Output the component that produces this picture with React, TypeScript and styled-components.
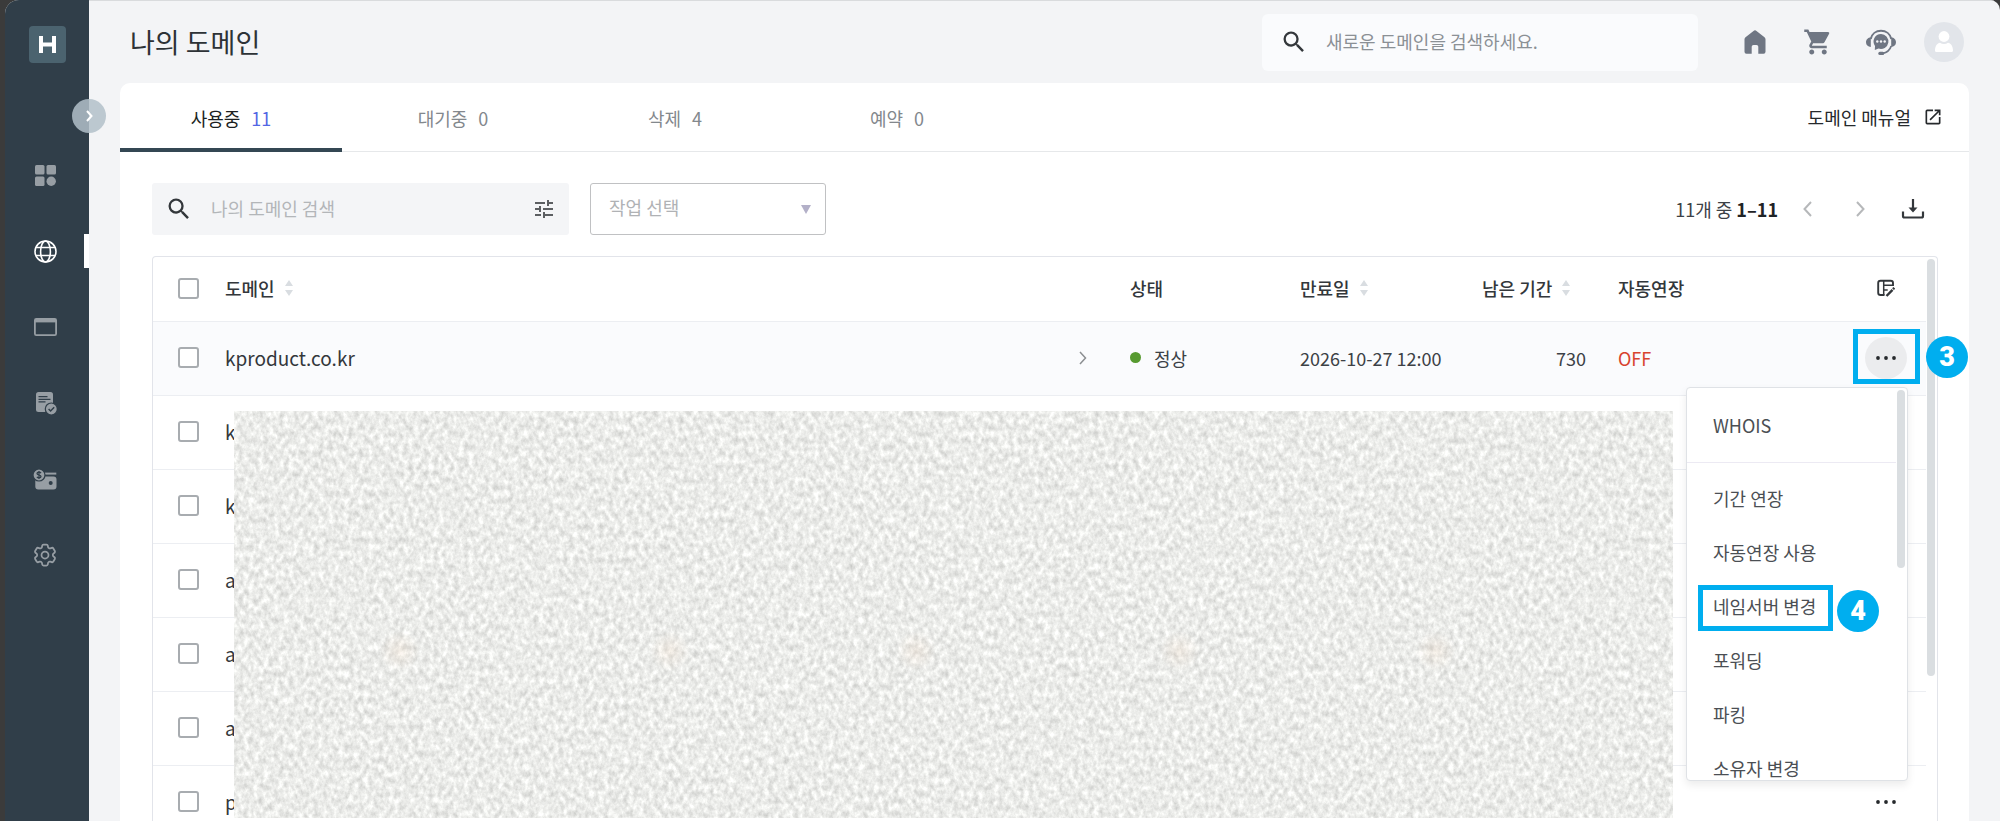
import React from "react";
import styled, { createGlobalStyle, css } from "styled-components";
import { MdOpenInNew, MdSearch, MdShoppingCart, MdTune } from "react-icons/md";
import { HiOutlineCog6Tooth } from "react-icons/hi2";

const GlobalStyle = createGlobalStyle`
  *, *::before, *::after { box-sizing: border-box; }
  body {
    margin: 0;
    background: #3b3b3b;
    color: #3c4146;
    font-family: "Noto Sans CJK KR", "Noto Sans", sans-serif;
    font-size: 18px;
    line-height: 26px;
  }
  button, input, select { font: inherit; color: inherit; }
  button { border: 0; padding: 0; background: none; cursor: pointer; }
  a { color: inherit; text-decoration: none; }
`;

const ACCENT = "#00aeef";
const LINE = "#eceef2";

/* ---------- shell ---------- */

const Shell = styled.div`
  display: flex;
  height: 100vh;
  margin-left: 5px;
  overflow: hidden;
  border-radius: 14px 10px 0 0;
  background: #f3f4f6;
`;

const Sidebar = styled.aside`
  position: relative;
  z-index: 2;
  flex: none;
  width: 84px;
  padding-top: 26px;
  background: #303e49;
`;

const Logo = styled.a`
  display: flex;
  align-items: center;
  justify-content: center;
  width: 37px;
  height: 37px;
  margin: 0 auto 74px;
  border-radius: 4px;
  background: #4b636f;
`;

const ExpandButton = styled.button`
  position: absolute;
  top: 99px;
  right: -17px;
  display: flex;
  align-items: center;
  justify-content: center;
  width: 34px;
  height: 34px;
  border-radius: 50%;
  background: rgba(177, 191, 201, 0.85);
`;

const Nav = styled.nav`
  display: flex;
  flex-direction: column;
`;

const NavItem = styled.a<{ $active?: boolean }>`
  position: relative;
  display: flex;
  align-items: center;
  justify-content: center;
  height: 76px;
  padding-right: 4px;
  color: ${(p) => (p.$active ? "#ffffff" : "#979ea4")};
  ${(p) =>
    p.$active &&
    css`
      &::after {
        content: "";
        position: absolute;
        right: 0;
        width: 5px;
        height: 34px;
        background: #ffffff;
      }
    `}
`;

const Main = styled.main`
  flex: 1;
  min-width: 0;
  display: flex;
  flex-direction: column;
  padding: 0 31px;
  border-top: 1px solid #d9dbdd;
`;

const Header = styled.header`
  display: flex;
  align-items: center;
  height: 82px;
  padding: 0 5px 0 10px;
`;

const Title = styled.h1`
  flex: 1;
  margin: 0;
  color: #2d3236;
  font-size: 27px;
  font-weight: 400;
  line-height: 38px;
`;

const SearchBox = styled.label<{ $large?: boolean }>`
  display: flex;
  align-items: center;
  gap: 18px;
  width: ${(p) => (p.$large ? "436px" : "417px")};
  height: ${(p) => (p.$large ? "57px" : "52px")};
  padding: 0 ${(p) => (p.$large ? "18px" : "13px")};
  border-radius: ${(p) => (p.$large ? "6px" : "3px")};
  background: ${(p) => (p.$large ? "#fafbfd" : "#f4f5f7")};
  color: #33373b;
  svg { flex: none; }
`;

const SearchInput = styled.input<{ $tone: string }>`
  flex: 1;
  min-width: 0;
  padding: 0 0 3px;
  border: 0;
  outline: 0;
  background: none;
  &::placeholder { color: ${(p) => p.$tone}; opacity: 1; }
`;

const HeaderActions = styled.div`
  display: flex;
  gap: 23px;
  margin-left: 37px;
  color: #6f7683;
`;

const RoundButton = styled.button<{ $fill?: string }>`
  display: flex;
  align-items: center;
  justify-content: center;
  width: 40px;
  height: 40px;
  border-radius: 50%;
  background: ${(p) => p.$fill ?? "transparent"};
`;

/* ---------- card ---------- */

const Card = styled.section`
  flex: 1;
  min-height: 0;
  display: flex;
  flex-direction: column;
  border-radius: 10px 10px 0 0;
  background: #ffffff;
`;

const TabBar = styled.div`
  display: flex;
  align-items: stretch;
  height: 69px;
  border-bottom: 1px solid #e6e8ea;
`;

const Tab = styled.button<{ $active?: boolean }>`
  width: 222px;
  margin-bottom: -1px;
  padding-top: 4px;
  border-bottom: 4px solid ${(p) => (p.$active ? "#344753" : "transparent")};
  color: ${(p) => (p.$active ? "#1c1f22" : "#83888d")};
`;

const TabCount = styled.span<{ $active?: boolean }>`
  margin-left: 11px;
  color: ${(p) => (p.$active ? "#5266e4" : "inherit")};
`;

const ManualLink = styled.a`
  display: flex;
  align-items: center;
  gap: 12px;
  margin-left: auto;
  margin-right: 26px;
  color: #26292c;
`;

const Toolbar = styled.div`
  display: flex;
  align-items: center;
  gap: 21px;
  padding: 31px 36px 21px 32px;
`;

const SelectWrap = styled.div`
  position: relative;
  width: 236px;
  svg {
    position: absolute;
    top: 22px;
    right: 15px;
    pointer-events: none;
  }
`;

const Select = styled.select`
  appearance: none;
  display: block;
  width: 100%;
  height: 52px;
  padding: 0 40px 4px 18px;
  border: 1px solid #c0c1c3;
  border-radius: 3px;
  background: #ffffff;
  color: #b0b2b5;
`;

const Pager = styled.div`
  display: flex;
  align-items: center;
  gap: 13px;
  margin-left: auto;
  strong { color: #1f2326; font-weight: 700; }
`;

const PagerText = styled.span`
  margin-right: -4px;
`;

/* ---------- table ---------- */

const Panel = styled.div`
  position: relative;
  flex: 1;
  min-height: 0;
  display: flex;
  margin: 0 31px 0 32px;
  border: 1px solid #e2e4ea;
  border-bottom: 0;
  border-radius: 4px 4px 0 0;
`;

const TableScroll = styled.div`
  flex: 1;
  min-width: 0;
  overflow: hidden;
`;

const Rail = styled.div`
  flex: none;
  width: 11px;
  padding: 2px 2px 0 1px;
`;

const Thumb = styled.div<{ $length: number }>`
  width: 8px;
  height: ${(p) => p.$length}px;
  border-radius: 4px;
  background: #dadee1;
`;

const Table = styled.table`
  width: 100%;
  table-layout: fixed;
  border-collapse: separate;
  border-spacing: 0;
`;

const Col = styled.col<{ $width?: number }>`
  width: ${(p) => (p.$width ? `${p.$width}px` : "auto")};
`;

const Th = styled.th`
  height: 65px;
  padding: 0 0 2px;
  border-bottom: 1px solid ${LINE};
  color: #33373b;
  font-weight: 500;
  text-align: left;
`;

const Td = styled.td<{ $align?: string; $endPad?: number; $tone?: string; $size?: number }>`
  height: 74px;
  padding: 0 ${(p) => p.$endPad ?? 0}px 2px 0;
  border-bottom: 1px solid ${LINE};
  color: ${(p) => p.$tone ?? "inherit"};
  font-size: ${(p) => p.$size ?? 18}px;
  text-align: ${(p) => p.$align ?? "left"};
`;

const Tr = styled.tr<{ $hover?: boolean }>`
  background: ${(p) => (p.$hover ? "#fafbfd" : "#ffffff")};
`;

const CellFlex = styled.div<{ $between?: boolean; $gap?: number }>`
  display: flex;
  align-items: center;
  justify-content: ${(p) => (p.$between ? "space-between" : "flex-start")};
  gap: ${(p) => p.$gap ?? 0}px;
`;

const Check = styled.input`
  appearance: none;
  display: block;
  width: 21px;
  height: 21px;
  margin: 0 0 0 25px;
  border: 2px solid #a8acb0;
  border-radius: 3px;
  background: #ffffff;
`;

const Dot = styled.span`
  width: 11px;
  height: 11px;
  border-radius: 50%;
  background: #579a30;
`;

const CellButton = styled.button<{ $open?: boolean }>`
  display: flex;
  align-items: center;
  justify-content: center;
  width: 42px;
  height: 42px;
  margin: 0 auto;
  border-radius: 50%;
  color: #26292c;
  background: ${(p) => (p.$open ? "#ebecee" : "transparent")};
`;

const Redaction = styled.svg`
  position: absolute;
  top: 154px;
  left: 81px;
  width: calc(100% - 345px);
  height: 407px;
`;

/* ---------- row menu ---------- */

const Menu = styled.div`
  position: absolute;
  top: 130px;
  right: 29px;
  z-index: 1;
  display: flex;
  width: 222px;
  height: 394px;
  border: 1px solid #dfe2e6;
  border-radius: 4px;
  background: #ffffff;
  box-shadow: 0 4px 8px rgba(0, 0, 0, 0.08);
`;

const MenuScroll = styled.div`
  flex: 1;
  overflow: hidden;
`;

const MenuGroup = styled.div`
  padding: 10px 0;
  & + & {
    padding-top: 8px;
    border-top: 1px solid #eceaf3;
  }
`;

const MenuItem = styled.button`
  display: block;
  width: 100%;
  height: 54px;
  padding-left: 26px;
  color: #4b4f54;
  text-align: left;
`;

/* ---------- step callouts ---------- */

const Frame = styled.div<{ $top: number; $right: number; $w: number; $h: number }>`
  position: absolute;
  z-index: 2;
  top: ${(p) => p.$top}px;
  right: ${(p) => p.$right}px;
  width: ${(p) => p.$w}px;
  height: ${(p) => p.$h}px;
  border: 5px solid ${ACCENT};
  pointer-events: none;
`;

const Badge = styled.span<{ $top: number; $right: number }>`
  position: absolute;
  z-index: 2;
  top: ${(p) => p.$top}px;
  right: ${(p) => p.$right}px;
  width: 42px;
  height: 42px;
  border-radius: 50%;
  background: ${ACCENT};
  color: #ffffff;
  font-family: Roboto, sans-serif;
  font-size: 27px;
  font-weight: 900;
  line-height: 42px;
  text-align: center;
`;

/* ---------- icons ---------- */

const LogoMark = () => (
  <svg width="17" height="17" viewBox="0 0 17 17" fill="none" stroke="#fff" strokeWidth="4">
    <path d="M2 0v17M15 0v17M2 8.5h13" />
  </svg>
);

const DashboardIcon = () => (
  <svg width="21" height="21" viewBox="0 0 21 21" fill="currentColor">
    <rect width="9.5" height="9.5" rx="1.5" />
    <rect x="11.5" width="9.5" height="9.5" rx="1.5" />
    <rect y="11.5" width="9.5" height="9.5" rx="1.5" />
    <circle cx="16.2" cy="16.2" r="4.7" />
  </svg>
);

const GlobeIcon = () => (
  <svg width="23" height="23" viewBox="0 0 23 23" fill="none" stroke="currentColor" strokeWidth="1.6">
    <circle cx="11.5" cy="11.5" r="10.5" />
    <ellipse cx="11.5" cy="11.5" rx="4.9" ry="10.5" />
    <path d="M2 7.5h19M2 15.5h19" />
  </svg>
);

const WindowIcon = () => (
  <svg width="23" height="18" viewBox="0 0 23 18">
    <rect x="0.9" y="0.9" width="21.2" height="16.2" rx="1.4" fill="none" stroke="currentColor" strokeWidth="1.8" />
    <path d="M1 1h21v3.4H1z" fill="currentColor" />
  </svg>
);

const DocumentIcon = () => (
  <svg width="23" height="23" viewBox="0 0 23 23">
    <rect x="2" width="17" height="20" rx="2.5" fill="currentColor" />
    <path d="M4.5 4.7h9M4.5 7.3h12M4.5 9.9h7" stroke="#303e49" strokeWidth="1.2" />
    <circle cx="17.3" cy="17" r="6" fill="currentColor" stroke="#303e49" strokeWidth="1.2" />
    <path d="M14.6 17l2 2 3.6-3.7" fill="none" stroke="#303e49" strokeWidth="1.5" />
  </svg>
);

const WalletIcon = () => (
  <svg width="24" height="21" viewBox="0 0 24 21">
    <path d="M12 4.6h11.3" stroke="currentColor" strokeWidth="2" />
    <path d="M2.3 7.500h18.200a3 3 0 0 1 3 3v7a3 3 0 0 1-3 3H5.300a3 3 0 0 1-3-3z" fill="currentColor" />
    <circle cx="17.700" cy="14" r="2" fill="#303e49" />
    <circle cx="6" cy="6" r="6" fill="currentColor" stroke="#303e49" strokeWidth="1.200" />
    <path d="M8 4.200c-.5-.8-1.200-1-2-1-1.200 0-2 .5-2 1.400 0 2 4 .9 4 2.900 0 .9-.8 1.400-2 1.400-.9 0-1.600-.3-2.100-1M6 2v8" fill="none" stroke="#303e49" strokeWidth="1.300" />
  </svg>
);

const HomeIcon = () => (
  <svg width="22" height="24" viewBox="0 0 22 24" fill="currentColor">
    <path d="M11 .3c.6 0 1 .2 1.500.6l8 6.300c.6.500 1 1.200 1 2v12.600a1.900 1.900 0 0 1-1.900 1.900h-5.300v-7a1.800 1.800 0 0 0-1.800-1.800h-3a1.800 1.800 0 0 0-1.800 1.800v7H2.400A1.900 1.900 0 0 1 .5 21.800V9.200c0-.8.3-1.500 1-2l8-6.300c.5-.4.9-.6 1.500-.6z" />
  </svg>
);

const SupportIcon = () => (
  <svg width="30" height="27" viewBox="0 0 30 27" fill="currentColor">
    <path d="M4.700 10C5.800 5 10 1.800 15 1.800S24.200 5 25.300 10" fill="none" stroke="currentColor" strokeWidth="2" />
    <path d="M4.800 8.500v9.500C2 18 0 16 0 13.300s2-4.800 4.800-4.800zM25.200 8.500v9.500c2.800 0 4.800-2 4.800-4.700s-2-4.800-4.800-4.800z" />
    <path d="M25.200 17c-1.200 4-4.200 6.500-8.700 7.400" fill="none" stroke="currentColor" strokeWidth="1.700" />
    <rect x="12.300" y="22.800" width="6" height="3.200" rx="1.600" />
    <path d="M15 5a7.500 7.500 0 1 1-2.500 14.600L8.800 21l.2-4.100A7.500 7.500 0 0 1 15 5z" />
    <g fill="#f3f4f6">
      <circle cx="11.300" cy="12.500" r="1.200" />
      <circle cx="15" cy="12.500" r="1.200" />
      <circle cx="18.700" cy="12.500" r="1.200" />
    </g>
  </svg>
);

const AvatarIcon = () => (
  <svg width="20" height="22" viewBox="0 0 20 22" fill="#fff">
    <circle cx="10" cy="5.500" r="5.400" />
    <path d="M1 19.500c0-4.500 2.300-7.500 5-7.800 1.200.8 2.500 1.200 4 1.200s2.800-.4 4-1.200c2.700.3 5 3.300 5 7.800 0 .900-.5 1.500-1.400 1.500H2.400C1.500 21 1 20.400 1 19.500z" />
  </svg>
);

const DownloadIcon = () => (
  <svg width="24" height="24" viewBox="0 0 24 24" fill="none" stroke="#33373b" strokeWidth="2.200">
    <path d="M12 2v11" />
    <path d="M7.500 10.500h9L12 15.500z" fill="#33373b" stroke="none" />
    <path d="M2 14.500v4.500q0 1.500 1.500 1.500h17q1.500 0 1.500-1.500v-4.500" />
  </svg>
);

const ColumnsEditIcon = () => (
  <svg width="18" height="18" viewBox="0 0 18 18" fill="none" stroke="#33373b" strokeWidth="1.900">
    <path d="M7.500 16H3.500Q1.200 16 1.200 13.700V4Q1.200 1.700 3.500 1.700H13.700Q16 1.700 16 4V7" />
    <path d="M6.700 2v14M6.700 6.300H16M6.700 11h4" strokeWidth="1.500" />
    <path d="M9.500 17l6-6.200" strokeWidth="2.400" />
    <path d="M16 10.200l1.300-1.300" strokeWidth="2.400" />
  </svg>
);

type ChevronProps = { dir?: "left" | "right"; color: string; w?: number; h?: number; stroke?: number };

const Chevron = ({ dir = "right", color, w = 9, h = 16, stroke = 2 }: ChevronProps) => (
  <svg width={w} height={h} viewBox={`0 0 ${w} ${h}`} fill="none" stroke={color} strokeWidth={stroke}>
    <path d={dir === "right" ? `M1 1L${w - 1.5} ${h / 2}L1 ${h - 1}` : `M${w - 1} 1L1.5 ${h / 2}L${w - 1} ${h - 1}`} />
  </svg>
);

const SortIcon = () => (
  <svg width="8" height="16" viewBox="0 0 8 16" fill="#d9dde1">
    <path d="M4 0l4 6H0zM4 16l4-6H0z" />
  </svg>
);

const DotsIcon = () => (
  <svg width="20" height="4" viewBox="0 0 20 4" fill="currentColor">
    <circle cx="2" cy="2" r="1.900" />
    <circle cx="10" cy="2" r="1.900" />
    <circle cx="18" cy="2" r="1.900" />
  </svg>
);

/* ---------- data ---------- */

const tabs = [
  { label: "사용중", count: 11 },
  { label: "대기중", count: 0 },
  { label: "삭제", count: 4 },
  { label: "예약", count: 0 },
];

const rows = ["kproduct.co.kr", "k", "k", "a", "a", "a", "p"];

const menuGroups = [
  ["WHOIS"],
  ["기간 연장", "자동연장 사용", "네임서버 변경", "포워딩", "파킹", "소유자 변경"],
];

const nav = [
  { label: "대시보드", icon: <DashboardIcon /> },
  { label: "도메인", icon: <GlobeIcon />, active: true },
  { label: "호스팅", icon: <WindowIcon /> },
  { label: "신청 내역", icon: <DocumentIcon /> },
  { label: "결제", icon: <WalletIcon /> },
  { label: "설정", icon: <HiOutlineCog6Tooth size={28} /> },
];

const stains = ["11.5%", "30.3%", "47.4%", "65.7%", "83.5%"];

const SortHead = ({ label }: { label: string }) => (
  <CellFlex $gap={10}>
    {label}
    <SortIcon />
  </CellFlex>
);

export default function App() {
  return (
    <>
      <GlobalStyle />
      <Shell>
        <Sidebar>
          <Logo href="#" aria-label="홈">
            <LogoMark />
          </Logo>
          <ExpandButton aria-label="메뉴 펼치기">
            <Chevron color="#fff" w={7} h={12} stroke={2} />
          </ExpandButton>
          <Nav>
            {nav.map((n) => (
              <NavItem key={n.label} href="#" aria-label={n.label} $active={n.active}>
                {n.icon}
              </NavItem>
            ))}
          </Nav>
        </Sidebar>

        <Main>
          <Header>
            <Title>나의 도메인</Title>
            <SearchBox $large>
              <MdSearch size={28} />
              <SearchInput $tone="#8b9095" placeholder="새로운 도메인을 검색하세요." aria-label="새로운 도메인 검색" />
            </SearchBox>
            <HeaderActions>
              <RoundButton aria-label="홈">
                <HomeIcon />
              </RoundButton>
              <RoundButton aria-label="장바구니">
                <MdShoppingCart size={30} />
              </RoundButton>
              <RoundButton aria-label="고객센터">
                <SupportIcon />
              </RoundButton>
              <RoundButton aria-label="내 계정" $fill="#e2e5ea">
                <AvatarIcon />
              </RoundButton>
            </HeaderActions>
          </Header>

          <Card>
            <TabBar>
              {tabs.map((t, i) => (
                <Tab key={t.label} $active={i === 0}>
                  {t.label}
                  <TabCount $active={i === 0}>{t.count}</TabCount>
                </Tab>
              ))}
              <ManualLink href="#">
                도메인 매뉴얼
                <MdOpenInNew size={20} />
              </ManualLink>
            </TabBar>

            <Toolbar>
              <SearchBox>
                <MdSearch size={28} />
                <SearchInput $tone="#b3b6b9" placeholder="나의 도메인 검색" aria-label="나의 도메인 검색" />
                <MdTune size={24} color="#5c5f62" />
              </SearchBox>
              <SelectWrap>
                <Select aria-label="작업 선택" defaultValue="">
                  <option value="">작업 선택</option>
                </Select>
                <svg width="10" height="9" viewBox="0 0 10 9" fill="#b3b0c8">
                  <path d="M0 0h10L5 9z" />
                </svg>
              </SelectWrap>
              <Pager>
                <PagerText>
                  11개 중 <strong>1–11</strong>
                </PagerText>
                <RoundButton aria-label="이전">
                  <Chevron dir="left" color="#b6b8ba" />
                </RoundButton>
                <RoundButton aria-label="다음">
                  <Chevron color="#b6b8ba" />
                </RoundButton>
                <RoundButton aria-label="내려받기">
                  <DownloadIcon />
                </RoundButton>
              </Pager>
            </Toolbar>

            <Panel>
              <TableScroll>
                <Table>
                  <colgroup>
                    <Col $width={72} />
                    <Col />
                    <Col $width={170} />
                    <Col $width={182} />
                    <Col $width={136} />
                    <Col $width={228} />
                    <Col $width={80} />
                  </colgroup>
                  <thead>
                    <tr>
                      <Th>
                        <Check type="checkbox" aria-label="전체 선택" />
                      </Th>
                      <Th><SortHead label="도메인" /></Th>
                      <Th>상태</Th>
                      <Th><SortHead label="만료일" /></Th>
                      <Th><SortHead label="남은 기간" /></Th>
                      <Th>자동연장</Th>
                      <Th>
                        <CellButton aria-label="열 편집">
                          <ColumnsEditIcon />
                        </CellButton>
                      </Th>
                    </tr>
                  </thead>
                  <tbody>
                    {rows.map((name, i) => {
                      const first = i === 0;
                      return (
                        <Tr key={i} $hover={first}>
                          <Td>
                            <Check type="checkbox" aria-label={`${name} 선택`} />
                          </Td>
                          <Td $endPad={43} $tone="#33373b" $size={19}>
                            <CellFlex $between>
                              {name}
                              {first && <Chevron color="#8b8e91" w={8} h={14} stroke={1.5} />}
                            </CellFlex>
                          </Td>
                          <Td>
                            {first && (
                              <CellFlex $gap={13}>
                                <Dot />
                                정상
                              </CellFlex>
                            )}
                          </Td>
                          <Td>{first && "2026-10-27 12:00"}</Td>
                          <Td $align="right" $endPad={32}>{first && "730"}</Td>
                          <Td $tone="#d8432f">{first && "OFF"}</Td>
                          <Td>
                            <CellButton $open={first} aria-label="더보기">
                              <DotsIcon />
                            </CellButton>
                          </Td>
                        </Tr>
                      );
                    })}
                  </tbody>
                </Table>
              </TableScroll>
              <Rail>
                <Thumb $length={417} />
              </Rail>

              <Redaction aria-hidden="true">
                <defs>
                  <filter id="grain" x="0" y="0" width="100%" height="100%" colorInterpolationFilters="sRGB">
                    <feTurbulence type="fractalNoise" baseFrequency="0.2 0.15" numOctaves="4" seed="7" />
                    <feColorMatrix
                      values="0.3 0 0 0 0.772
                              0.3 0 0 0 0.775
                              0.3 0 0 0 0.765
                              0 0 0 0 1"
                    />
                  </filter>
                  <radialGradient id="stain">
                    <stop offset="0" stopColor="#f0d9c4" stopOpacity="0.28" />
                    <stop offset="1" stopColor="#f0d9c4" stopOpacity="0" />
                  </radialGradient>
                </defs>
                <rect width="100%" height="100%" filter="url(#grain)" />
                {stains.map((x) => (
                  <circle key={x} cx={x} cy="240" r="20" fill="url(#stain)" />
                ))}
              </Redaction>

              <Menu>
                <MenuScroll>
                  {menuGroups.map((group) => (
                    <MenuGroup key={group[0]}>
                      {group.map((item) => (
                        <MenuItem key={item}>{item}</MenuItem>
                      ))}
                    </MenuGroup>
                  ))}
                </MenuScroll>
                <Rail>
                  <Thumb $length={178} />
                </Rail>
              </Menu>

              <Frame $top={72} $right={17} $w={67} $h={55} />
              <Badge $top={79} $right={-31}>3</Badge>
              <Frame $top={328} $right={104} $w={135} $h={46} />
              <Badge $top={333} $right={58}>4</Badge>
            </Panel>
          </Card>
        </Main>
      </Shell>
    </>
  );
}
